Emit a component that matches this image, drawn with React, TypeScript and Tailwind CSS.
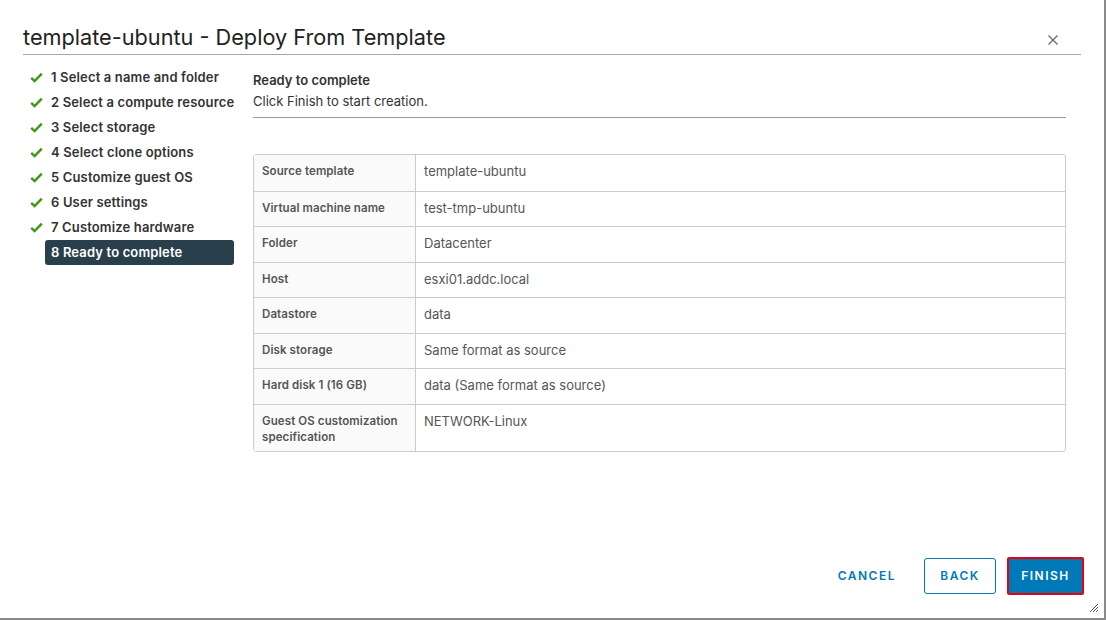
import React from 'react'

const steps = [
  '1 Select a name and folder',
  '2 Select a compute resource',
  '3 Select storage',
  '4 Select clone options',
  '5 Customize guest OS',
  '6 User settings',
  '7 Customize hardware',
]

const rows: { label: string; value: string; tall?: boolean }[] = [
  { label: 'Source template', value: 'template-ubuntu' },
  { label: 'Virtual machine name', value: 'test-tmp-ubuntu' },
  { label: 'Folder', value: 'Datacenter' },
  { label: 'Host', value: 'esxi01.addc.local' },
  { label: 'Datastore', value: 'data' },
  { label: 'Disk storage', value: 'Same format as source' },
  { label: 'Hard disk 1 (16 GB)', value: 'data (Same format as source)' },
  { label: 'Guest OS customization specification', value: 'NETWORK-Linux', tall: true },
]

function Check() {
  return (
    <svg width="13" height="11" viewBox="0 0 13 11" className="shrink-0">
      <path d="M1.2 5.8 L4.6 9 L11.8 1.6" fill="none" stroke="#3c9a12" strokeWidth="2.4" />
    </svg>
  )
}

export default function App() {
  return (
    <div
      className="relative h-[620px] w-[1106px] overflow-hidden border-r-2 border-b-2 border-[#8a8a8a] bg-white text-[#313131]"
      style={{ fontFamily: 'Inter, "Open Sans", sans-serif' }}
    >
      {/* header */}
      <div className="mx-[23px] mt-[22px] flex items-center justify-between border-b border-[#a6a6a6] pb-[2px] pr-[22px]">
        <h1 className="text-[21.7px] leading-[30px] font-normal text-[#222]">template-ubuntu - Deploy From Template</h1>
        <svg width="12" height="12" viewBox="0 0 12 12" className="mt-[5px]">
          <path d="M1.5 1.5 L10.5 10.5 M10.5 1.5 L1.5 10.5" stroke="#6a6a6a" strokeWidth="1.3" />
        </svg>
      </div>

      <div className="flex">
        {/* steps */}
        <nav className="ml-[30px] mt-[10px] w-[204px] shrink-0">
          {steps.map((s) => (
            <div
              key={s}
              className="flex h-[25px] items-center gap-[8px] whitespace-nowrap text-[13px] font-semibold tracking-[0.15px] text-[#333]"
            >
              <Check />
              <span>{s}</span>
            </div>
          ))}
          <div className="ml-[15px] flex h-[25px] items-center whitespace-nowrap rounded-[3px] bg-[#2a3f4c] pl-[6px] text-[13px] font-semibold tracking-[0.15px] text-white">
            8 Ready to complete
          </div>
        </nav>

        {/* content */}
        <div className="ml-[19px] mt-[15px] w-[813px]">
          <div className="text-[13px] font-semibold leading-[20px] text-[#333]">Ready to complete</div>
          <div className="mt-[1px] text-[13px] leading-[20px] text-[#333]">Click Finish to start creation.</div>
          <div className="mt-[6px] border-b border-[#9a9a9a]" />

          <div className="mt-[36px] rounded-[3px] border border-[#cccccc]">
            {rows.map((r, i) => (
              <div
                key={r.label}
                className={`flex ${i > 0 ? 'border-t border-[#cccccc]' : ''} ${r.tall ? 'h-[47px]' : 'h-[35.5px]'}`}
              >
                <div className="w-[162px] shrink-0 border-r border-[#cccccc] bg-[#fafafa] px-[8px] pt-[8px] text-[11.5px] font-semibold leading-[16px] tracking-[0.1px] text-[#555]">
                  {r.label}
                </div>
                <div className="px-[8px] pt-[7px] text-[13px] leading-[18px] text-[#565656]">{r.value}</div>
              </div>
            ))}
          </div>
        </div>
      </div>

      {/* footer */}
      <div className="absolute bottom-[23px] right-[20px] flex items-center gap-[11px]">
        <button className="h-[36px] px-[17px] text-[12px] font-semibold tracking-[1.5px] text-[#0079b8]">CANCEL</button>
        <button className="h-[36px] w-[72px] rounded-[3px] border border-[#0079b8] text-[12px] font-semibold tracking-[1.5px] text-[#0079b8]">
          BACK
        </button>
        <button className="h-[38px] w-[77px] rounded-[2px] border-2 border-[#e8000f] bg-[#0079b8] text-[12px] font-semibold tracking-[1.5px] text-white">
          FINISH
        </button>
      </div>

      {/* resize grip */}
      <svg width="8" height="8" viewBox="0 0 8 8" className="absolute bottom-[6px] right-[6px]">
        <path d="M8 0 L0 8 M8 3 L3 8 M8 6 L6 8" stroke="#555" strokeWidth="1" />
      </svg>
    </div>
  )
}
